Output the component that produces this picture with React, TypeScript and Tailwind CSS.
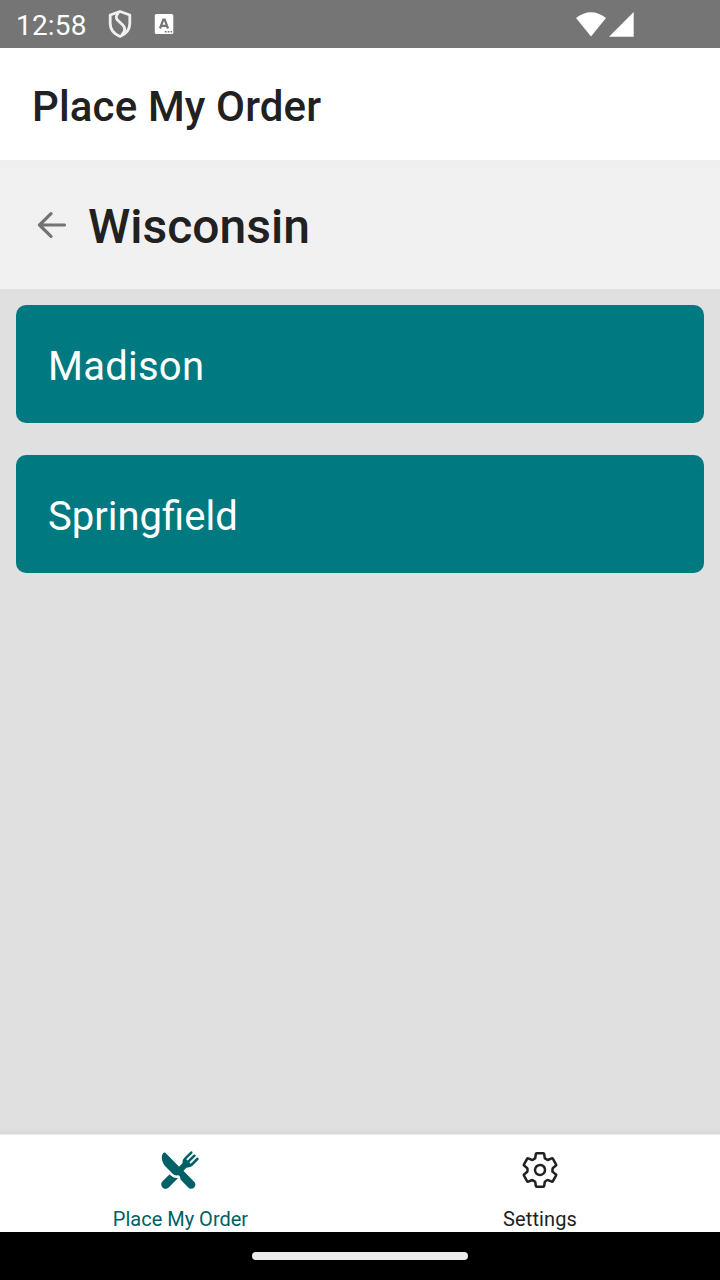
import React from "react";
import { IoRestaurant, IoSettingsOutline } from "react-icons/io5";

function StatusBar() {
  return (
    <header className="flex h-12 shrink-0 items-center bg-[#757575] pl-4 pr-[86px] text-white">
      <span className="w-[71px] whitespace-nowrap pt-[3px] text-[28px] leading-[45px] tracking-[0.2px]">12:58</span>
      <svg className="ml-[20px] h-[30px] w-[26px]" viewBox="0 0 26 30" fill="none" stroke="#f0f0f0" strokeWidth="2.8" strokeLinejoin="round">
        <path d="M13 2.500 22.800 6v8.500c0 6-4 10.500-9.800 13C7 25 3.200 20.500 3.200 14.500V6Z" />
        <path d="M11.500 3.500C8.500 7 8.500 9.500 11.500 12l4 3.700c3.500 3.300 2.500 7.300-1 10.300" />
      </svg>
      <svg className="ml-[21px] h-5 w-5" viewBox="0 0 20 20">
        <rect x="0.800" y="0" width="18.500" height="20" rx="1.500" fill="#fff" />
        <path d="M6 14.500 9.300 5.500h1.400L14 14.500M7.500 11.800h5" fill="none" stroke="#757575" strokeWidth="2.200" />
        <path d="M10.800 17.800h1.700M13.700 17.800h1.700M16.600 17.800h1.500" stroke="#757575" strokeWidth="1.500" />
      </svg>
      <svg className="ml-auto h-[26px] w-[60px]" viewBox="0 0 60 26" fill="#fff">
        <path d="M2 7Q17 -4.500 32 7L17 25.500Z" />
        <path d="M59.700 1V25.700H35Z" />
      </svg>
    </header>
  );
}

function CityButton({ name, spacing }: { name: string; spacing: string }) {
  return (
    <button className="flex h-[118px] w-full items-center rounded-[10px] bg-[#007980] px-8 pt-1.5 text-left text-white">
      <span className={`text-[40px] leading-[48px] ${spacing}`}>{name}</span>
    </button>
  );
}

export default function App() {
  return (
    <div className="flex h-[1280px] w-[720px] flex-col overflow-hidden bg-[#e0e0e0] font-['Roboto',sans-serif] text-[#212121]">
      <StatusBar />
      <div className="flex h-28 shrink-0 items-center bg-white px-8 pt-1.5">
        <h1 className="whitespace-nowrap text-[42px] font-medium leading-[48px] tracking-[0.15px]">Place My Order</h1>
      </div>
      <div className="flex h-[129px] shrink-0 items-center border-t-[7px] border-[#efefef] bg-[#f1f1f1] pl-9">
        <svg className="h-8 w-8" viewBox="0 0 32 32" fill="none" stroke="#737373" strokeWidth="3.200" strokeLinecap="round" strokeLinejoin="round">
          <path d="M28.500 13H3.500M15 1.700 3.500 13 15 24.300" />
        </svg>
        <h2 className="ml-5 whitespace-nowrap pb-0.5 text-[48px] font-medium leading-[56px]">Wisconsin</h2>
      </div>
      <main className="flex grow flex-col gap-8 p-4">
        <CityButton name="Madison" spacing="tracking-[0.25px]" />
        <CityButton name="Springfield" spacing="tracking-normal" />
      </main>
      <div className="h-1.5 shrink-0 bg-linear-to-b from-[#e0e0e0] to-[#d8d8d8]" />
      <nav className="grid h-[98px] shrink-0 grid-cols-2 border-t border-[#ececec] bg-white">
        <button className="flex flex-col items-center pt-[15px] text-[#006066]">
          <IoRestaurant className="size-10 shrink-0" />
          <span className="mt-[17px] pl-px text-[20px] leading-6">Place My Order</span>
        </button>
        <button className="flex flex-col items-center pt-[15px]">
          <IoSettingsOutline className="size-10 shrink-0" />
          <span className="mt-[17px] text-[20px] leading-6 tracking-[0.1px]">Settings</span>
        </button>
      </nav>
      <footer className="flex h-12 shrink-0 items-center justify-center bg-black">
        <div className="h-2 w-[216px] rounded-full bg-[#ececec]" />
      </footer>
    </div>
  );
}
